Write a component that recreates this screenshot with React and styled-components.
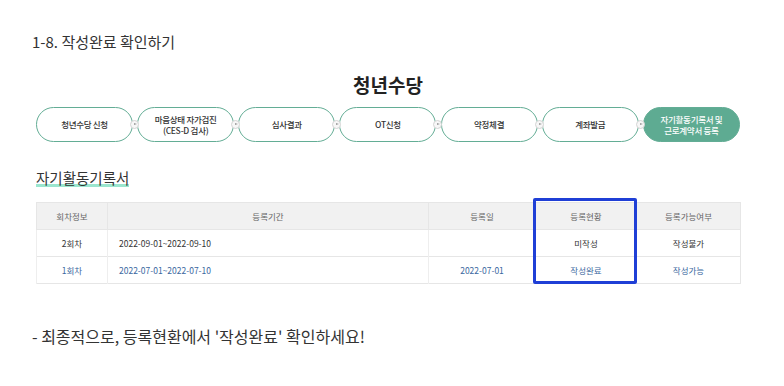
import React from 'react'
import styled, { createGlobalStyle } from 'styled-components'

const steps = [
  ['청년수당 신청'],
  ['마음상태 자가검진', '(CES-D 검사)'],
  ['심사결과'],
  ['OT신청'],
  ['약정체결'],
  ['계좌발급'],
  ['자기활동기록서 및', '근로계약서 등록'],
]

const columns = [
  { title: '회차정보', width: 71 },
  { title: '등록기간', width: 321 },
  { title: '등록일', width: 107 },
  { title: '등록현황', width: 101 },
  { title: '등록가능여부', width: 104 },
]

const rows = [
  { done: false, cells: ['2회차', '2022-09-01~2022-09-10', '', '미작성', '작성불가'] },
  { done: true, cells: ['1회차', '2022-07-01~2022-07-10', '2022-07-01', '작성완료', '작성가능'] },
]

const GlobalStyle = createGlobalStyle`
  body {
    margin: 0;
    background: #fff;
    font-family: "Noto Sans CJK KR", "Noto Sans", sans-serif;
    color: #333;
  }
`

const Page = styled.div`
  width: 784px;
  height: 386px;
  padding: 32px 0 0 32px;
  box-sizing: border-box;
`

const Heading = styled.div`
  font-size: 15px;
  line-height: 20px;
  color: #333;
`

const Board = styled.div`
  width: 704px;
  margin-left: 4px;
`

const BigTitle = styled.div`
  margin-top: 21px;
  text-align: center;
  font-size: 19px;
  line-height: 24px;
  font-weight: 700;
  color: #222;
`

const Steps = styled.div`
  display: flex;
  justify-content: space-between;
  margin-top: 10px;
`

const Step = styled.div`
  position: relative;
  width: 97px;
  height: 35px;
  box-sizing: border-box;
  border: 1px solid #63ad95;
  border-radius: 18px;
  background: ${p => (p.$active ? '#5eab92' : '#fff')};
  color: ${p => (p.$active ? '#fff' : '#333')};
  display: flex;
  flex-direction: column;
  align-items: center;
  justify-content: center;
  font-size: 8.5px;
  line-height: 11px;
  font-weight: 500;
  letter-spacing: -0.3px;
  text-align: center;
`

const Connector = styled.span`
  position: absolute;
  right: -7px;
  top: 50%;
  width: 9px;
  height: 9px;
  margin-top: -5px;
  box-sizing: border-box;
  border: 1px solid #d4d4d4;
  border-radius: 50%;
  background: #f7f7f7;
  z-index: 1;
  &::after {
    content: '';
    position: absolute;
    left: 3px;
    top: 2px;
    border-left: 3px solid #999;
    border-top: 1.5px solid transparent;
    border-bottom: 1.5px solid transparent;
  }
`

const SectionTitle = styled.div`
  margin-top: 26px;
  font-size: 14.5px;
  line-height: 20px;
  color: #333;
  span {
    background: linear-gradient(transparent 80%, #9be6cf 80%, #9be6cf 94%, transparent 94%);
  }
`

const TableWrap = styled.div`
  position: relative;
  margin-top: 14px;
`

const Table = styled.table`
  width: 704px;
  border-collapse: collapse;
  table-layout: fixed;
  font-size: 8.5px;
  border: 1px solid #e6e6e6;
`

const Th = styled.th`
  height: 26px;
  padding: 0;
  background: #f1f1f1;
  color: #666;
  font-weight: 400;
  border-left: 1px solid #e6e6e6;
`

const Td = styled.td`
  height: 26px;
  padding: ${p => (p.$left ? '0 0 0 11px' : '0')};
  text-align: ${p => (p.$left ? 'left' : 'center')};
  color: ${p => (p.$done ? '#3a67a0' : '#333')};
  font-weight: 400;
  border-left: 1px solid #eeeeee;
  border-top: 1px solid #e6e6e6;
`

const Highlight = styled.div`
  position: absolute;
  left: 497px;
  top: -4px;
  width: 104px;
  height: 86px;
  box-sizing: border-box;
  border: 3px solid #1f3fd6;
  border-radius: 2px;
  pointer-events: none;
`

const Footer = styled.div`
  margin-top: 42px;
  font-size: 16px;
  line-height: 20px;
  color: #333;
`

export default function App() {
  return (
    <Page>
      <GlobalStyle />
      <Heading>1-8. 작성완료 확인하기</Heading>
      <Board>
        <BigTitle>청년수당</BigTitle>
        <Steps>
          {steps.map((lines, i) => (
            <Step key={i} $active={i === steps.length - 1}>
              {lines.map(l => (
                <div key={l}>{l}</div>
              ))}
              {i < steps.length - 1 && <Connector />}
            </Step>
          ))}
        </Steps>
        <SectionTitle>
          <span>자기활동기록서</span>
        </SectionTitle>
        <TableWrap>
          <Table>
            <colgroup>
              {columns.map(c => (
                <col key={c.title} style={{ width: c.width }} />
              ))}
            </colgroup>
            <thead>
              <tr>
                {columns.map(c => (
                  <Th key={c.title}>{c.title}</Th>
                ))}
              </tr>
            </thead>
            <tbody>
              {rows.map((r, ri) => (
                <tr key={ri}>
                  {r.cells.map((c, ci) => (
                    <Td key={ci} $left={ci === 1} $done={r.done}>
                      {c}
                    </Td>
                  ))}
                </tr>
              ))}
            </tbody>
          </Table>
          <Highlight />
        </TableWrap>
      </Board>
      <Footer>- 최종적으로, 등록현환에서 '작성완료' 확인하세요!</Footer>
    </Page>
  )
}
